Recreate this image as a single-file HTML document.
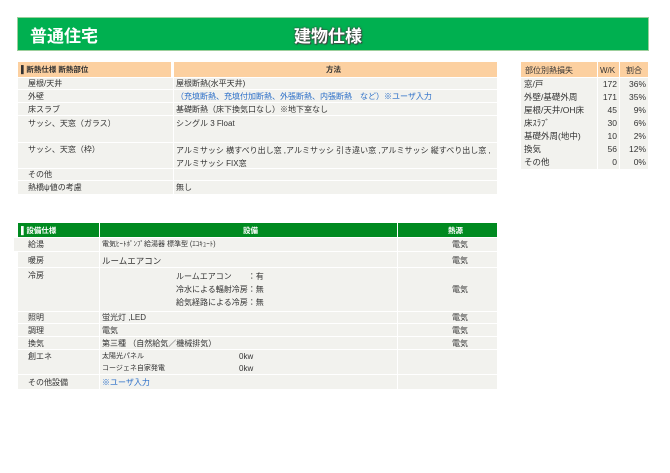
<!DOCTYPE html><html><head><meta charset="utf-8"><style>
*{margin:0;padding:0;box-sizing:border-box}
body{width:670px;height:473px;background:#fff;position:relative;font-family:"Liberation Sans","Noto Sans CJK JP",sans-serif;font-size:8px;color:#333;overflow:hidden}
.a{position:absolute}
.band{left:17px;top:17px;width:632px;height:34px;background:#00b050;border:1px solid #9ccf9c}
.t1{left:30px;top:22px;font-size:17px;color:#fff;font-weight:bold}
.t2{left:294px;top:22px;font-size:17px;color:#fff;font-weight:bold;text-shadow:0 0 2px #444,0 0 1px #333,1px 1px 1px #444}
.r{position:absolute;background:#f2f2ee;border-bottom:1px solid #fff}
.c{position:absolute;line-height:12px;white-space:nowrap}
.hd{background:#fcd0a0;font-weight:bold;color:#222}
.gh{background:#008a20;color:#fff;font-weight:bold}
.blue{color:#2a6ec8}
</style></head><body>
<div class="a band"></div><div class="a t1">普通住宅</div><div class="a t2">建物仕様</div>

<div class="r hd" style="left:18px;top:62px;width:155px;height:16px;border-right:2px solid #fff"></div>
<div class="r hd" style="left:174px;top:62px;width:323px;height:16px"></div>
<div class="c" style="left:21px;top:64px;font-weight:bold;font-size:7.5px">▌断熱仕様 断熱部位</div>
<div class="c" style="left:326px;top:64px;font-weight:bold;font-size:7.5px">方法</div>
<div class="r" style="left:18px;top:78px;width:479px;height:12px"></div>
<div class="r" style="left:18px;top:90px;width:479px;height:13px"></div>
<div class="r" style="left:18px;top:103px;width:479px;height:13px"></div>
<div class="r" style="left:18px;top:116px;width:479px;height:27px"></div>
<div class="r" style="left:18px;top:143px;width:479px;height:26px"></div>
<div class="r" style="left:18px;top:169px;width:479px;height:12px"></div>
<div class="r" style="left:18px;top:181px;width:479px;height:14px"></div>
<div class="a" style="left:173px;top:78px;width:1px;height:117px;background:#fff"></div>
<div class="c" style="left:28px;top:78px">屋根/天井</div><div class="c" style="left:176px;top:78px">屋根断熱(水平天井)</div>
<div class="c" style="left:28px;top:91px">外壁</div><div class="c blue" style="left:176px;top:91px">（充填断熱、充填付加断熱、外張断熱、内張断熱　など）※ユーザ入力</div>
<div class="c" style="left:28px;top:104px">床スラブ</div><div class="c" style="left:176px;top:104px">基礎断熱（床下換気口なし）※地下室なし</div>
<div class="c" style="left:28px;top:118px">サッシ、天窓（ガラス）</div><div class="c" style="left:176px;top:118px">シングル 3  Float</div>
<div class="c" style="left:28px;top:144px">サッシ、天窓（枠）</div><div class="c" style="left:176px;top:144px;line-height:13px">アルミサッシ 横すべり出し窓 ,アルミサッシ 引き違い窓 ,アルミサッシ 縦すべり出し窓 ,<br>アルミサッシ FIX窓</div>
<div class="c" style="left:28px;top:169px">その他</div>
<div class="c" style="left:28px;top:182px">熱橋ψ値の考慮</div><div class="c" style="left:176px;top:182px">無し</div>

<div class="r hd" style="left:521px;top:62px;width:76px;height:16px;font-weight:normal"></div>
<div class="r hd" style="left:598px;top:62px;width:21px;height:16px"></div>
<div class="r hd" style="left:620px;top:62px;width:28px;height:16px"></div>
<div class="c" style="left:525px;top:65px">部位別熱損失</div><div class="c" style="left:600px;top:65px">W/K</div><div class="c" style="left:626px;top:65px">割合</div>
<div class="r" style="left:521px;top:78px;width:127px;height:91px;border:none"></div>
<div class="a" style="left:597px;top:78px;width:1px;height:91px;background:#fff"></div>
<div class="a" style="left:619px;top:78px;width:1px;height:91px;background:#fff"></div>
<div class="c" style="left:524px;top:78px;line-height:13px;font-size:8.5px">窓/戸<br>外壁/基礎外周<br>屋根/天井/OH床<br>床ｽﾗﾌﾞ<br>基礎外周(地中)<br>換気<br>その他</div>
<div class="c" style="left:596px;top:78px;width:21px;text-align:right;line-height:13px;font-size:8.5px">172<br>171<br>45<br>30<br>10<br>56<br>0</div>
<div class="c" style="left:618px;top:78px;width:28px;text-align:right;line-height:13px;font-size:8.5px">36%<br>35%<br>9%<br>6%<br>2%<br>12%<br>0%</div>

<div class="r gh" style="left:18px;top:223px;width:81px;height:15px"></div>
<div class="r gh" style="left:100px;top:223px;width:297px;height:15px"></div>
<div class="r gh" style="left:398px;top:223px;width:99px;height:15px"></div>
<div class="c" style="left:21px;top:225px;color:#fff;font-weight:bold;font-size:7.5px">▌設備仕様</div>
<div class="c" style="left:243px;top:225px;color:#fff;font-weight:bold;font-size:7.5px">設備</div>
<div class="c" style="left:448px;top:225px;color:#fff;font-weight:bold;font-size:7.5px">熱源</div>
<div class="r" style="left:14px;top:238px;width:483px;height:14px"></div>
<div class="r" style="left:18px;top:252px;width:479px;height:16px"></div>
<div class="r" style="left:18px;top:268px;width:479px;height:44px"></div>
<div class="r" style="left:18px;top:312px;width:479px;height:12px"></div>
<div class="r" style="left:18px;top:324px;width:479px;height:13px"></div>
<div class="r" style="left:18px;top:337px;width:479px;height:13px"></div>
<div class="r" style="left:18px;top:350px;width:479px;height:25px"></div>
<div class="r" style="left:18px;top:375px;width:479px;height:15px"></div>
<div class="a" style="left:99px;top:238px;width:1px;height:152px;background:#fff"></div>
<div class="a" style="left:397px;top:238px;width:1px;height:152px;background:#fff"></div>
<div class="c" style="left:28px;top:239px">給湯</div><div class="c" style="left:102px;top:239px;font-size:7px">電気ﾋｰﾄﾎﾟﾝﾌﾟ給湯器 標準型 (ｴｺｷｭｰﾄ)</div><div class="c" style="left:452px;top:239px">電気</div>
<div class="c" style="left:28px;top:255px">暖房</div><div class="c" style="left:102px;top:255px;font-size:8.5px">ルームエアコン</div><div class="c" style="left:452px;top:255px">電気</div>
<div class="c" style="left:28px;top:270px">冷房</div><div class="c" style="left:176px;top:270px;line-height:13px">ルームエアコン　　：有<br>冷水による輻射冷房：無<br>給気経路による冷房：無</div><div class="c" style="left:452px;top:284px">電気</div>
<div class="c" style="left:28px;top:312px">照明</div><div class="c" style="left:102px;top:312px">蛍光灯 ,LED</div><div class="c" style="left:452px;top:312px">電気</div>
<div class="c" style="left:28px;top:325px">調理</div><div class="c" style="left:102px;top:325px">電気</div><div class="c" style="left:452px;top:325px">電気</div>
<div class="c" style="left:28px;top:338px">換気</div><div class="c" style="left:102px;top:338px">第三種 （自然給気／機械排気）</div><div class="c" style="left:452px;top:338px">電気</div>
<div class="c" style="left:28px;top:351px">創エネ</div><div class="c" style="left:102px;top:351px;font-size:7px;line-height:12px">太陽光パネル<br>コージェネ自家発電</div><div class="c" style="left:239px;top:351px;line-height:12px">0kw<br>0kw</div>
<div class="c" style="left:28px;top:377px">その他設備</div><div class="c blue" style="left:102px;top:377px">※ユーザ入力</div>
</body></html>
